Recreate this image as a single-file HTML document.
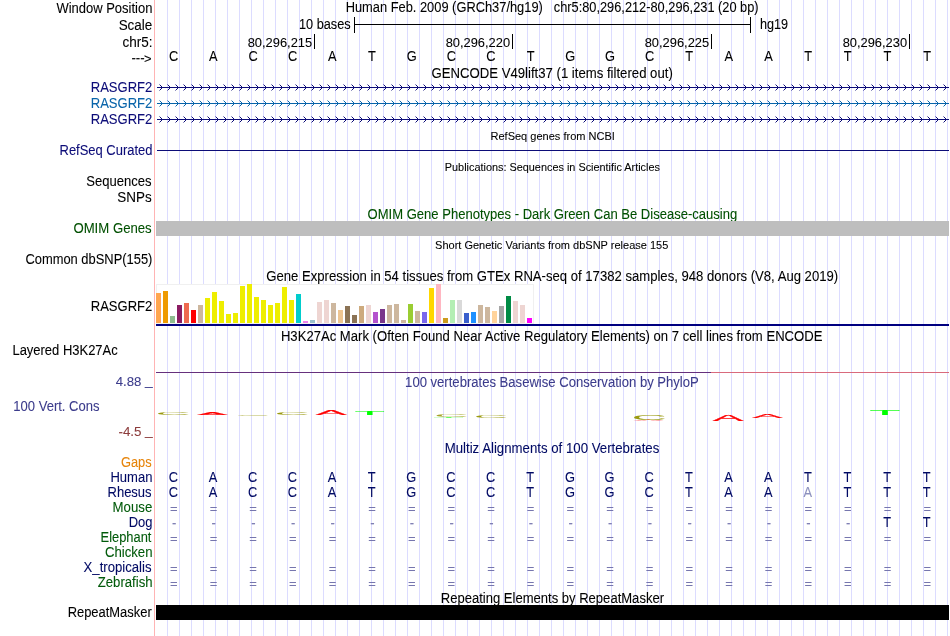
<!DOCTYPE html>
<html><head><meta charset="utf-8"><title>UCSC Genome Browser chr5:80,296,212-80,296,231</title>
<style>
html,body{margin:0;padding:0;background:#fff;}
svg{display:block;font-family:"Liberation Sans",sans-serif;font-size:13.8px;will-change:transform;}
text{white-space:pre;fill:currentColor;stroke:currentColor;stroke-width:.08px;}
.lg text{stroke-width:.6px;vector-effect:non-scaling-stroke;}
</style></head><body>
<svg width="950" height="636" viewBox="0 0 950 636">
<rect width="950" height="636" fill="#fff"/>
<g shape-rendering="crispEdges" fill="#dcdcff">
<rect x="167" y="0" width="1" height="636"/>
<rect x="179" y="0" width="1" height="636"/>
<rect x="191" y="0" width="1" height="636"/>
<rect x="203" y="0" width="1" height="636"/>
<rect x="215" y="0" width="1" height="636"/>
<rect x="227" y="0" width="1" height="636"/>
<rect x="239" y="0" width="1" height="636"/>
<rect x="251" y="0" width="1" height="636"/>
<rect x="263" y="0" width="1" height="636"/>
<rect x="275" y="0" width="1" height="636"/>
<rect x="287" y="0" width="1" height="636"/>
<rect x="299" y="0" width="1" height="636"/>
<rect x="311" y="0" width="1" height="636"/>
<rect x="323" y="0" width="1" height="636"/>
<rect x="335" y="0" width="1" height="636"/>
<rect x="347" y="0" width="1" height="636"/>
<rect x="359" y="0" width="1" height="636"/>
<rect x="371" y="0" width="1" height="636"/>
<rect x="383" y="0" width="1" height="636"/>
<rect x="395" y="0" width="1" height="636"/>
<rect x="407" y="0" width="1" height="636"/>
<rect x="419" y="0" width="1" height="636"/>
<rect x="431" y="0" width="1" height="636"/>
<rect x="443" y="0" width="1" height="636"/>
<rect x="455" y="0" width="1" height="636"/>
<rect x="467" y="0" width="1" height="636"/>
<rect x="479" y="0" width="1" height="636"/>
<rect x="491" y="0" width="1" height="636"/>
<rect x="503" y="0" width="1" height="636"/>
<rect x="515" y="0" width="1" height="636"/>
<rect x="527" y="0" width="1" height="636"/>
<rect x="539" y="0" width="1" height="636"/>
<rect x="551" y="0" width="1" height="636"/>
<rect x="563" y="0" width="1" height="636"/>
<rect x="575" y="0" width="1" height="636"/>
<rect x="587" y="0" width="1" height="636"/>
<rect x="599" y="0" width="1" height="636"/>
<rect x="611" y="0" width="1" height="636"/>
<rect x="623" y="0" width="1" height="636"/>
<rect x="635" y="0" width="1" height="636"/>
<rect x="647" y="0" width="1" height="636"/>
<rect x="659" y="0" width="1" height="636"/>
<rect x="671" y="0" width="1" height="636"/>
<rect x="683" y="0" width="1" height="636"/>
<rect x="695" y="0" width="1" height="636"/>
<rect x="707" y="0" width="1" height="636"/>
<rect x="719" y="0" width="1" height="636"/>
<rect x="731" y="0" width="1" height="636"/>
<rect x="743" y="0" width="1" height="636"/>
<rect x="755" y="0" width="1" height="636"/>
<rect x="767" y="0" width="1" height="636"/>
<rect x="779" y="0" width="1" height="636"/>
<rect x="791" y="0" width="1" height="636"/>
<rect x="803" y="0" width="1" height="636"/>
<rect x="815" y="0" width="1" height="636"/>
<rect x="827" y="0" width="1" height="636"/>
<rect x="839" y="0" width="1" height="636"/>
<rect x="851" y="0" width="1" height="636"/>
<rect x="863" y="0" width="1" height="636"/>
<rect x="875" y="0" width="1" height="636"/>
<rect x="887" y="0" width="1" height="636"/>
<rect x="899" y="0" width="1" height="636"/>
<rect x="911" y="0" width="1" height="636"/>
<rect x="923" y="0" width="1" height="636"/>
<rect x="935" y="0" width="1" height="636"/>
<rect x="947" y="0" width="1" height="636"/>
<rect x="154" y="0" width="1" height="636" fill="#ffb4b4"/>
</g>
<text x="56.39" y="13" textLength="96.06" lengthAdjust="spacingAndGlyphs">Window Position</text>
<text x="118.65" y="30" textLength="33.64" lengthAdjust="spacingAndGlyphs">Scale</text>
<text x="122.56" y="47" textLength="30.06" lengthAdjust="spacingAndGlyphs">chr5:</text>
<text x="131.41" y="62" font-size="13" textLength="13.21" lengthAdjust="spacingAndGlyphs">---</text>
<text x="143.96" y="63" font-size="12" textLength="7.53" lengthAdjust="spacingAndGlyphs">&gt;</text>
<text x="345.64" y="12" textLength="197.22" lengthAdjust="spacingAndGlyphs">Human Feb. 2009 (GRCh37/hg19)</text>
<text x="553.8" y="12" textLength="204.78" lengthAdjust="spacingAndGlyphs">chr5:80,296,212-80,296,231 (20 bp)</text>
<g shape-rendering="crispEdges">
<rect x="354" y="24" width="397" height="1" fill="#000"/>
<rect x="354" y="17" width="1" height="16" fill="#000"/>
<rect x="750" y="17" width="1" height="16" fill="#000"/>
</g>
<text x="298.94" y="29" textLength="51.69" lengthAdjust="spacingAndGlyphs">10 bases</text>
<text x="759.93" y="29" textLength="28.16" lengthAdjust="spacingAndGlyphs">hg19</text>
<rect x="314" y="34" width="1" height="15" fill="#000" shape-rendering="crispEdges"/>
<text x="247.68" y="47" font-size="13.5" textLength="64.5" lengthAdjust="spacingAndGlyphs">80,296,215</text>
<rect x="512" y="34" width="1" height="15" fill="#000" shape-rendering="crispEdges"/>
<text x="445.69" y="47" font-size="13.5" textLength="64.36" lengthAdjust="spacingAndGlyphs">80,296,220</text>
<rect x="711" y="34" width="1" height="15" fill="#000" shape-rendering="crispEdges"/>
<text x="644.68" y="47" font-size="13.5" textLength="64.5" lengthAdjust="spacingAndGlyphs">80,296,225</text>
<rect x="909" y="34" width="1" height="15" fill="#000" shape-rendering="crispEdges"/>
<text x="842.69" y="47" font-size="13.5" textLength="64.36" lengthAdjust="spacingAndGlyphs">80,296,230</text>
<text x="173.72" y="61" text-anchor="middle" textLength="9.27" lengthAdjust="spacingAndGlyphs">C</text>
<text x="213.38" y="61" text-anchor="middle" textLength="8.56" lengthAdjust="spacingAndGlyphs">A</text>
<text x="253.03" y="61" text-anchor="middle" textLength="9.27" lengthAdjust="spacingAndGlyphs">C</text>
<text x="292.67" y="61" text-anchor="middle" textLength="9.27" lengthAdjust="spacingAndGlyphs">C</text>
<text x="332.32" y="61" text-anchor="middle" textLength="8.56" lengthAdjust="spacingAndGlyphs">A</text>
<text x="371.97" y="61" text-anchor="middle" textLength="7.84" lengthAdjust="spacingAndGlyphs">T</text>
<text x="411.62" y="61" text-anchor="middle" textLength="9.98" lengthAdjust="spacingAndGlyphs">G</text>
<text x="451.27" y="61" text-anchor="middle" textLength="9.27" lengthAdjust="spacingAndGlyphs">C</text>
<text x="490.92" y="61" text-anchor="middle" textLength="9.27" lengthAdjust="spacingAndGlyphs">C</text>
<text x="530.57" y="61" text-anchor="middle" textLength="7.84" lengthAdjust="spacingAndGlyphs">T</text>
<text x="570.23" y="61" text-anchor="middle" textLength="9.98" lengthAdjust="spacingAndGlyphs">G</text>
<text x="609.88" y="61" text-anchor="middle" textLength="9.98" lengthAdjust="spacingAndGlyphs">G</text>
<text x="649.52" y="61" text-anchor="middle" textLength="9.27" lengthAdjust="spacingAndGlyphs">C</text>
<text x="689.17" y="61" text-anchor="middle" textLength="7.84" lengthAdjust="spacingAndGlyphs">T</text>
<text x="728.83" y="61" text-anchor="middle" textLength="8.56" lengthAdjust="spacingAndGlyphs">A</text>
<text x="768.48" y="61" text-anchor="middle" textLength="8.56" lengthAdjust="spacingAndGlyphs">A</text>
<text x="808.12" y="61" text-anchor="middle" textLength="7.84" lengthAdjust="spacingAndGlyphs">T</text>
<text x="847.77" y="61" text-anchor="middle" textLength="7.84" lengthAdjust="spacingAndGlyphs">T</text>
<text x="887.42" y="61" text-anchor="middle" textLength="7.84" lengthAdjust="spacingAndGlyphs">T</text>
<text x="927.08" y="61" text-anchor="middle" textLength="7.84" lengthAdjust="spacingAndGlyphs">T</text>
<text x="431.5" y="78" textLength="241.28" lengthAdjust="spacingAndGlyphs">GENCODE V49lift37 (1 items filtered out)</text>
<defs><pattern id="barb" width="8" height="7" patternUnits="userSpaceOnUse"><g fill="#0c0c78" shape-rendering="crispEdges"><path d="M4 1h1v1h-1zM5 2h1v1h-1zM5 4h1v1h-1zM4 5h1v1h-1z"/><path d="M3 0h1v1h-1zM3 6h1v1h-1z" fill-opacity=".45"/></g></pattern>
<pattern id="barb2" width="8" height="7" patternUnits="userSpaceOnUse"><g fill="#0864aa" shape-rendering="crispEdges"><path d="M4 1h1v1h-1zM5 2h1v1h-1zM5 4h1v1h-1zM4 5h1v1h-1z"/><path d="M3 0h1v1h-1zM3 6h1v1h-1z" fill-opacity=".45"/></g></pattern></defs>
<text x="90.73" y="92" color="#0c0c78" textLength="61.54" lengthAdjust="spacingAndGlyphs">RASGRF2</text>
<g shape-rendering="crispEdges"><rect x="157" y="87" width="792" height="1" fill="#0c0c78"/><rect transform="translate(156,84)" width="793" height="7" fill="url(#barb)"/></g>
<text x="90.73" y="108" color="#0864aa" textLength="61.54" lengthAdjust="spacingAndGlyphs">RASGRF2</text>
<g shape-rendering="crispEdges"><rect x="157" y="103" width="792" height="1" fill="#0864aa"/><rect transform="translate(156,100)" width="793" height="7" fill="url(#barb2)"/></g>
<text x="90.73" y="124" color="#0c0c78" textLength="61.54" lengthAdjust="spacingAndGlyphs">RASGRF2</text>
<g shape-rendering="crispEdges"><rect x="157" y="119" width="792" height="1" fill="#0c0c78"/><rect transform="translate(156,116)" width="793" height="7" fill="url(#barb)"/></g>
<text x="490.5" y="140" font-size="11.3" textLength="124.33" lengthAdjust="spacingAndGlyphs">RefSeq genes from NCBI</text>
<text x="59.53" y="155" color="#0c0c78" textLength="92.98" lengthAdjust="spacingAndGlyphs">RefSeq Curated</text>
<rect x="157" y="150" width="792" height="1" fill="#0c0c78" shape-rendering="crispEdges"/>
<text x="444.81" y="171" font-size="11.3" textLength="215.16" lengthAdjust="spacingAndGlyphs">Publications: Sequences in Scientific Articles</text>
<text x="86.36" y="186" textLength="65.21" lengthAdjust="spacingAndGlyphs">Sequences</text>
<text x="117.35" y="202" textLength="34.4" lengthAdjust="spacingAndGlyphs">SNPs</text>
<text x="367.54" y="219" color="#005000" textLength="369.75" lengthAdjust="spacingAndGlyphs">OMIM Gene Phenotypes - Dark Green Can Be Disease-causing</text>
<text x="73.43" y="233" color="#005000" textLength="78.27" lengthAdjust="spacingAndGlyphs">OMIM Genes</text>
<rect x="156" y="221" width="793" height="15" fill="#bebebe" shape-rendering="crispEdges"/>
<text x="435.07" y="249" font-size="11.3" textLength="233.25" lengthAdjust="spacingAndGlyphs">Short Genetic Variants from dbSNP release 155</text>
<text x="25.4" y="264" textLength="127.04" lengthAdjust="spacingAndGlyphs">Common dbSNP(155)</text>
<text x="266.3" y="281" textLength="571.84" lengthAdjust="spacingAndGlyphs">Gene Expression in 54 tissues from GTEx RNA-seq of 17382 samples, 948 donors (V8, Aug 2019)</text>
<text x="90.73" y="311" textLength="61.54" lengthAdjust="spacingAndGlyphs">RASGRF2</text>
<g shape-rendering="crispEdges">
<rect x="156" y="284" width="378" height="40" fill="#fff"/>
<rect x="156" y="284" width="378" height="1" fill="#f0f0f0"/>
<rect x="533" y="284" width="1" height="40" fill="#f0f0f0"/>
<rect x="156" y="284" width="1" height="40" fill="#f0f0f0"/>
<rect x="156" y="323" width="378" height="1" fill="#f0f0f0"/>
<rect x="156" y="293" width="5" height="30" fill="#FFA54F"/>
<rect x="163" y="291" width="5" height="32" fill="#EE9A00"/>
<rect x="170" y="316" width="5" height="7" fill="#8FBC8F"/>
<rect x="177" y="305" width="5" height="18" fill="#8B1C62"/>
<rect x="184" y="303" width="5" height="20" fill="#EE6A50"/>
<rect x="191" y="310" width="5" height="13" fill="#FF0000"/>
<rect x="198" y="305" width="5" height="18" fill="#CDB79E"/>
<rect x="205" y="298" width="5" height="25" fill="#EEEE00"/>
<rect x="212" y="292" width="5" height="31" fill="#EEEE00"/>
<rect x="219" y="301" width="5" height="22" fill="#EEEE00"/>
<rect x="226" y="314" width="5" height="9" fill="#EEEE00"/>
<rect x="233" y="313" width="5" height="10" fill="#EEEE00"/>
<rect x="240" y="286" width="5" height="37" fill="#EEEE00"/>
<rect x="247" y="284" width="5" height="39" fill="#EEEE00"/>
<rect x="254" y="297" width="5" height="26" fill="#EEEE00"/>
<rect x="261" y="300" width="5" height="23" fill="#EEEE00"/>
<rect x="268" y="305" width="5" height="18" fill="#EEEE00"/>
<rect x="275" y="303" width="5" height="20" fill="#EEEE00"/>
<rect x="282" y="287" width="5" height="36" fill="#EEEE00"/>
<rect x="289" y="300" width="5" height="23" fill="#EEEE00"/>
<rect x="296" y="294" width="5" height="29" fill="#00CDCD"/>
<rect x="303" y="321" width="5" height="2" fill="#EE82EE"/>
<rect x="310" y="320" width="5" height="3" fill="#9AC0CD"/>
<rect x="317" y="302" width="5" height="21" fill="#EED5D2"/>
<rect x="324" y="300" width="5" height="23" fill="#EED5D2"/>
<rect x="331" y="303" width="5" height="20" fill="#CDB79E"/>
<rect x="338" y="310" width="5" height="13" fill="#EEC591"/>
<rect x="345" y="306" width="5" height="17" fill="#8B7355"/>
<rect x="352" y="315" width="5" height="8" fill="#8B7355"/>
<rect x="359" y="306" width="5" height="17" fill="#CDAA7D"/>
<rect x="366" y="305" width="5" height="18" fill="#EED5D2"/>
<rect x="373" y="312" width="5" height="11" fill="#B452CD"/>
<rect x="380" y="309" width="5" height="14" fill="#7A378B"/>
<rect x="387" y="305" width="5" height="18" fill="#CDB79E"/>
<rect x="394" y="304" width="5" height="19" fill="#CDB79E"/>
<rect x="401" y="320" width="5" height="3" fill="#CDB79E"/>
<rect x="408" y="304" width="5" height="19" fill="#9ACD32"/>
<rect x="415" y="311" width="5" height="12" fill="#CDB79E"/>
<rect x="422" y="312" width="5" height="11" fill="#7A67EE"/>
<rect x="429" y="288" width="5" height="35" fill="#FFD700"/>
<rect x="436" y="284" width="5" height="39" fill="#FFB6C1"/>
<rect x="443" y="318" width="5" height="5" fill="#CD9B1D"/>
<rect x="450" y="300" width="5" height="23" fill="#B4EEB4"/>
<rect x="457" y="300" width="5" height="23" fill="#D9D9D9"/>
<rect x="464" y="313" width="5" height="10" fill="#3A5FCD"/>
<rect x="471" y="312" width="5" height="11" fill="#1E90FF"/>
<rect x="478" y="305" width="5" height="18" fill="#CDB79E"/>
<rect x="485" y="307" width="5" height="16" fill="#CDB79E"/>
<rect x="492" y="311" width="5" height="12" fill="#FFD39B"/>
<rect x="499" y="306" width="5" height="17" fill="#A6A6A6"/>
<rect x="506" y="296" width="5" height="27" fill="#008B45"/>
<rect x="513" y="301" width="5" height="22" fill="#EED5D2"/>
<rect x="520" y="305" width="5" height="18" fill="#EED5D2"/>
<rect x="527" y="318" width="5" height="5" fill="#FF00FF"/>
<rect x="156" y="324" width="793" height="2" fill="#000080"/>
</g>
<text x="280.92" y="341" textLength="541.54" lengthAdjust="spacingAndGlyphs">H3K27Ac Mark (Often Found Near Active Regulatory Elements) on 7 cell lines from ENCODE</text>
<text x="12.43" y="355" textLength="105.28" lengthAdjust="spacingAndGlyphs">Layered H3K27Ac</text>
<g shape-rendering="crispEdges"><rect x="156" y="372" width="555" height="1" fill="#66307c"/><rect x="711" y="372" width="238" height="1" fill="#d96a7c"/></g>
<text x="405.11" y="387" color="#3c3c8c" textLength="293.67" lengthAdjust="spacingAndGlyphs">100 vertebrates Basewise Conservation by PhyloP</text>
<text x="115.68" y="386" font-size="13.5" color="#3c3c8c" textLength="25.7" lengthAdjust="spacingAndGlyphs">4.88</text>
<text x="144.91" y="385" font-size="13.5" color="#3c3c8c" textLength="7.65" lengthAdjust="spacingAndGlyphs">_</text>
<text x="13.31" y="411" color="#3c3c8c" textLength="86.24" lengthAdjust="spacingAndGlyphs">100 Vert. Cons</text>
<text x="118.47" y="436" font-size="13.5" color="#8c3c3c" textLength="23.03" lengthAdjust="spacingAndGlyphs">-4.5</text>
<text x="144.91" y="435" font-size="13.5" color="#8c3c3c" textLength="7.65" lengthAdjust="spacingAndGlyphs">_</text>
<g class="lg">
<text transform="matrix(0.4810 0 0 0.0423 155.80 414.96)" font-size="100" color="#9a9a10" style="stroke-width:.25px">C</text>
<text transform="matrix(0.4545 0 0 0.0409 197.17 415.00)" font-size="100" color="#ff0000">A</text>
<text transform="matrix(0.4698 0 0 0.0197 236.05 415.98)" font-size="100" color="#9a9a10" opacity="0.7" style="stroke-width:.25px">C</text>
<text transform="matrix(0.4810 0 0 0.0423 274.80 414.96)" font-size="100" color="#9a9a10" style="stroke-width:.25px">C</text>
<text transform="matrix(0.4636 0 0 0.0657 315.87 415.20)" font-size="100" color="#ff0000">A</text>
<text transform="matrix(0.4920 0 0 0.0580 354.67 415.00)" font-size="100" color="#00ff00">T</text>
<text transform="matrix(0.4746 0 0 0.0296 434.33 417.07)" font-size="100" color="#9a9a10" opacity="0.9" style="stroke-width:.25px">C</text>
<text transform="matrix(0.4956 0 0 0.0174 433.76 418.20)" font-size="100" color="#00ff00" opacity="0.6">T</text>
<text transform="matrix(0.4746 0 0 0.0423 473.93 417.96)" font-size="100" color="#9a9a10" style="stroke-width:.25px">C</text>
<text transform="matrix(0.4841 0 0 0.0718 631.68 419.73)" font-size="100" color="#9a9a10" style="stroke-width:.25px">C</text>
<text transform="matrix(0.4470 0 0 0.0146 633.78 421.00)" font-size="100" color="#ff0000" opacity="0.7">A</text>
<text transform="matrix(0.4606 0 0 0.0920 712.87 421.00)" font-size="100" color="#ff0000">A</text>
<text transform="matrix(0.4545 0 0 0.0496 752.27 418.10)" font-size="100" color="#ff0000">A</text>
<text transform="matrix(0.4991 0 0 0.0725 869.75 415.00)" font-size="100" color="#00ff00">T</text>
</g>
<text x="444.71" y="453" color="#000a64" textLength="214.62" lengthAdjust="spacingAndGlyphs">Multiz Alignments of 100 Vertebrates</text>
<text x="120.92" y="467" color="#e6840a" textLength="30.65" lengthAdjust="spacingAndGlyphs">Gaps</text>
<text x="110.43" y="482" color="#000a64" textLength="42.01" lengthAdjust="spacingAndGlyphs">Human</text>
<text x="107.53" y="497" color="#000a64" textLength="44.09" lengthAdjust="spacingAndGlyphs">Rhesus</text>
<text x="112.61" y="512" color="#005a0a" textLength="39.68" lengthAdjust="spacingAndGlyphs">Mouse</text>
<text x="128.63" y="527" color="#000a64" textLength="23.75" lengthAdjust="spacingAndGlyphs">Dog</text>
<text x="100.54" y="542" color="#005a0a" textLength="50.87" lengthAdjust="spacingAndGlyphs">Elephant</text>
<text x="104.89" y="557" color="#005a0a" textLength="47.6" lengthAdjust="spacingAndGlyphs">Chicken</text>
<text x="83.57" y="572" color="#000a64" textLength="67.96" lengthAdjust="spacingAndGlyphs">X_tropicalis</text>
<text x="97.77" y="587" color="#005a0a" textLength="54.77" lengthAdjust="spacingAndGlyphs">Zebrafish</text>
<text x="173.42" y="482" color="#000a64" text-anchor="middle" textLength="9.27" lengthAdjust="spacingAndGlyphs">C</text>
<text x="173.42" y="497" color="#000a64" text-anchor="middle" textLength="9.27" lengthAdjust="spacingAndGlyphs">C</text>
<text x="173.82" y="513" font-size="13" color="#7676ae" text-anchor="middle">=</text>
<text x="173.82" y="543" font-size="13" color="#7676ae" text-anchor="middle">=</text>
<text x="173.82" y="573" font-size="13" color="#7676ae" text-anchor="middle">=</text>
<text x="173.82" y="588" font-size="13" color="#7676ae" text-anchor="middle">=</text>
<text x="174.12" y="527" font-size="13" color="#7676ae" text-anchor="middle">-</text>
<text x="213.07" y="482" color="#000a64" text-anchor="middle" textLength="8.56" lengthAdjust="spacingAndGlyphs">A</text>
<text x="213.07" y="497" color="#000a64" text-anchor="middle" textLength="8.56" lengthAdjust="spacingAndGlyphs">A</text>
<text x="213.47" y="513" font-size="13" color="#7676ae" text-anchor="middle">=</text>
<text x="213.47" y="543" font-size="13" color="#7676ae" text-anchor="middle">=</text>
<text x="213.47" y="573" font-size="13" color="#7676ae" text-anchor="middle">=</text>
<text x="213.47" y="588" font-size="13" color="#7676ae" text-anchor="middle">=</text>
<text x="213.77" y="527" font-size="13" color="#7676ae" text-anchor="middle">-</text>
<text x="252.72" y="482" color="#000a64" text-anchor="middle" textLength="9.27" lengthAdjust="spacingAndGlyphs">C</text>
<text x="252.72" y="497" color="#000a64" text-anchor="middle" textLength="9.27" lengthAdjust="spacingAndGlyphs">C</text>
<text x="253.12" y="513" font-size="13" color="#7676ae" text-anchor="middle">=</text>
<text x="253.12" y="543" font-size="13" color="#7676ae" text-anchor="middle">=</text>
<text x="253.12" y="573" font-size="13" color="#7676ae" text-anchor="middle">=</text>
<text x="253.12" y="588" font-size="13" color="#7676ae" text-anchor="middle">=</text>
<text x="253.42" y="527" font-size="13" color="#7676ae" text-anchor="middle">-</text>
<text x="292.38" y="482" color="#000a64" text-anchor="middle" textLength="9.27" lengthAdjust="spacingAndGlyphs">C</text>
<text x="292.38" y="497" color="#000a64" text-anchor="middle" textLength="9.27" lengthAdjust="spacingAndGlyphs">C</text>
<text x="292.78" y="513" font-size="13" color="#7676ae" text-anchor="middle">=</text>
<text x="292.78" y="543" font-size="13" color="#7676ae" text-anchor="middle">=</text>
<text x="292.78" y="573" font-size="13" color="#7676ae" text-anchor="middle">=</text>
<text x="292.78" y="588" font-size="13" color="#7676ae" text-anchor="middle">=</text>
<text x="293.08" y="527" font-size="13" color="#7676ae" text-anchor="middle">-</text>
<text x="332.03" y="482" color="#000a64" text-anchor="middle" textLength="8.56" lengthAdjust="spacingAndGlyphs">A</text>
<text x="332.03" y="497" color="#000a64" text-anchor="middle" textLength="8.56" lengthAdjust="spacingAndGlyphs">A</text>
<text x="332.43" y="513" font-size="13" color="#7676ae" text-anchor="middle">=</text>
<text x="332.43" y="543" font-size="13" color="#7676ae" text-anchor="middle">=</text>
<text x="332.43" y="573" font-size="13" color="#7676ae" text-anchor="middle">=</text>
<text x="332.43" y="588" font-size="13" color="#7676ae" text-anchor="middle">=</text>
<text x="332.73" y="527" font-size="13" color="#7676ae" text-anchor="middle">-</text>
<text x="371.68" y="482" color="#000a64" text-anchor="middle" textLength="7.84" lengthAdjust="spacingAndGlyphs">T</text>
<text x="371.68" y="497" color="#000a64" text-anchor="middle" textLength="7.84" lengthAdjust="spacingAndGlyphs">T</text>
<text x="372.08" y="513" font-size="13" color="#7676ae" text-anchor="middle">=</text>
<text x="372.08" y="543" font-size="13" color="#7676ae" text-anchor="middle">=</text>
<text x="372.08" y="573" font-size="13" color="#7676ae" text-anchor="middle">=</text>
<text x="372.08" y="588" font-size="13" color="#7676ae" text-anchor="middle">=</text>
<text x="372.38" y="527" font-size="13" color="#7676ae" text-anchor="middle">-</text>
<text x="411.32" y="482" color="#000a64" text-anchor="middle" textLength="9.98" lengthAdjust="spacingAndGlyphs">G</text>
<text x="411.32" y="497" color="#000a64" text-anchor="middle" textLength="9.98" lengthAdjust="spacingAndGlyphs">G</text>
<text x="411.72" y="513" font-size="13" color="#7676ae" text-anchor="middle">=</text>
<text x="411.72" y="543" font-size="13" color="#7676ae" text-anchor="middle">=</text>
<text x="411.72" y="573" font-size="13" color="#7676ae" text-anchor="middle">=</text>
<text x="411.72" y="588" font-size="13" color="#7676ae" text-anchor="middle">=</text>
<text x="412.02" y="527" font-size="13" color="#7676ae" text-anchor="middle">-</text>
<text x="450.98" y="482" color="#000a64" text-anchor="middle" textLength="9.27" lengthAdjust="spacingAndGlyphs">C</text>
<text x="450.98" y="497" color="#000a64" text-anchor="middle" textLength="9.27" lengthAdjust="spacingAndGlyphs">C</text>
<text x="451.38" y="513" font-size="13" color="#7676ae" text-anchor="middle">=</text>
<text x="451.38" y="543" font-size="13" color="#7676ae" text-anchor="middle">=</text>
<text x="451.38" y="573" font-size="13" color="#7676ae" text-anchor="middle">=</text>
<text x="451.38" y="588" font-size="13" color="#7676ae" text-anchor="middle">=</text>
<text x="451.68" y="527" font-size="13" color="#7676ae" text-anchor="middle">-</text>
<text x="490.62" y="482" color="#000a64" text-anchor="middle" textLength="9.27" lengthAdjust="spacingAndGlyphs">C</text>
<text x="490.62" y="497" color="#000a64" text-anchor="middle" textLength="9.27" lengthAdjust="spacingAndGlyphs">C</text>
<text x="491.02" y="513" font-size="13" color="#7676ae" text-anchor="middle">=</text>
<text x="491.02" y="543" font-size="13" color="#7676ae" text-anchor="middle">=</text>
<text x="491.02" y="573" font-size="13" color="#7676ae" text-anchor="middle">=</text>
<text x="491.02" y="588" font-size="13" color="#7676ae" text-anchor="middle">=</text>
<text x="491.32" y="527" font-size="13" color="#7676ae" text-anchor="middle">-</text>
<text x="530.27" y="482" color="#000a64" text-anchor="middle" textLength="7.84" lengthAdjust="spacingAndGlyphs">T</text>
<text x="530.27" y="497" color="#000a64" text-anchor="middle" textLength="7.84" lengthAdjust="spacingAndGlyphs">T</text>
<text x="530.67" y="513" font-size="13" color="#7676ae" text-anchor="middle">=</text>
<text x="530.67" y="543" font-size="13" color="#7676ae" text-anchor="middle">=</text>
<text x="530.67" y="573" font-size="13" color="#7676ae" text-anchor="middle">=</text>
<text x="530.67" y="588" font-size="13" color="#7676ae" text-anchor="middle">=</text>
<text x="530.97" y="527" font-size="13" color="#7676ae" text-anchor="middle">-</text>
<text x="569.93" y="482" color="#000a64" text-anchor="middle" textLength="9.98" lengthAdjust="spacingAndGlyphs">G</text>
<text x="569.93" y="497" color="#000a64" text-anchor="middle" textLength="9.98" lengthAdjust="spacingAndGlyphs">G</text>
<text x="570.33" y="513" font-size="13" color="#7676ae" text-anchor="middle">=</text>
<text x="570.33" y="543" font-size="13" color="#7676ae" text-anchor="middle">=</text>
<text x="570.33" y="573" font-size="13" color="#7676ae" text-anchor="middle">=</text>
<text x="570.33" y="588" font-size="13" color="#7676ae" text-anchor="middle">=</text>
<text x="570.63" y="527" font-size="13" color="#7676ae" text-anchor="middle">-</text>
<text x="609.58" y="482" color="#000a64" text-anchor="middle" textLength="9.98" lengthAdjust="spacingAndGlyphs">G</text>
<text x="609.58" y="497" color="#000a64" text-anchor="middle" textLength="9.98" lengthAdjust="spacingAndGlyphs">G</text>
<text x="609.98" y="513" font-size="13" color="#7676ae" text-anchor="middle">=</text>
<text x="609.98" y="543" font-size="13" color="#7676ae" text-anchor="middle">=</text>
<text x="609.98" y="573" font-size="13" color="#7676ae" text-anchor="middle">=</text>
<text x="609.98" y="588" font-size="13" color="#7676ae" text-anchor="middle">=</text>
<text x="610.28" y="527" font-size="13" color="#7676ae" text-anchor="middle">-</text>
<text x="649.23" y="482" color="#000a64" text-anchor="middle" textLength="9.27" lengthAdjust="spacingAndGlyphs">C</text>
<text x="649.23" y="497" color="#000a64" text-anchor="middle" textLength="9.27" lengthAdjust="spacingAndGlyphs">C</text>
<text x="649.63" y="513" font-size="13" color="#7676ae" text-anchor="middle">=</text>
<text x="649.63" y="543" font-size="13" color="#7676ae" text-anchor="middle">=</text>
<text x="649.63" y="573" font-size="13" color="#7676ae" text-anchor="middle">=</text>
<text x="649.63" y="588" font-size="13" color="#7676ae" text-anchor="middle">=</text>
<text x="649.93" y="527" font-size="13" color="#7676ae" text-anchor="middle">-</text>
<text x="688.88" y="482" color="#000a64" text-anchor="middle" textLength="7.84" lengthAdjust="spacingAndGlyphs">T</text>
<text x="688.88" y="497" color="#000a64" text-anchor="middle" textLength="7.84" lengthAdjust="spacingAndGlyphs">T</text>
<text x="689.28" y="513" font-size="13" color="#7676ae" text-anchor="middle">=</text>
<text x="689.28" y="543" font-size="13" color="#7676ae" text-anchor="middle">=</text>
<text x="689.28" y="573" font-size="13" color="#7676ae" text-anchor="middle">=</text>
<text x="689.28" y="588" font-size="13" color="#7676ae" text-anchor="middle">=</text>
<text x="689.58" y="527" font-size="13" color="#7676ae" text-anchor="middle">-</text>
<text x="728.53" y="482" color="#000a64" text-anchor="middle" textLength="8.56" lengthAdjust="spacingAndGlyphs">A</text>
<text x="728.53" y="497" color="#000a64" text-anchor="middle" textLength="8.56" lengthAdjust="spacingAndGlyphs">A</text>
<text x="728.93" y="513" font-size="13" color="#7676ae" text-anchor="middle">=</text>
<text x="728.93" y="543" font-size="13" color="#7676ae" text-anchor="middle">=</text>
<text x="728.93" y="573" font-size="13" color="#7676ae" text-anchor="middle">=</text>
<text x="728.93" y="588" font-size="13" color="#7676ae" text-anchor="middle">=</text>
<text x="729.23" y="527" font-size="13" color="#7676ae" text-anchor="middle">-</text>
<text x="768.18" y="482" color="#000a64" text-anchor="middle" textLength="8.56" lengthAdjust="spacingAndGlyphs">A</text>
<text x="768.18" y="497" color="#000a64" text-anchor="middle" textLength="8.56" lengthAdjust="spacingAndGlyphs">A</text>
<text x="768.58" y="513" font-size="13" color="#7676ae" text-anchor="middle">=</text>
<text x="768.58" y="543" font-size="13" color="#7676ae" text-anchor="middle">=</text>
<text x="768.58" y="573" font-size="13" color="#7676ae" text-anchor="middle">=</text>
<text x="768.58" y="588" font-size="13" color="#7676ae" text-anchor="middle">=</text>
<text x="768.88" y="527" font-size="13" color="#7676ae" text-anchor="middle">-</text>
<text x="807.83" y="482" color="#000a64" text-anchor="middle" textLength="7.84" lengthAdjust="spacingAndGlyphs">T</text>
<text x="807.83" y="497" color="#8c90be" text-anchor="middle" textLength="8.56" lengthAdjust="spacingAndGlyphs">A</text>
<text x="808.23" y="513" font-size="13" color="#7676ae" text-anchor="middle">=</text>
<text x="808.23" y="543" font-size="13" color="#7676ae" text-anchor="middle">=</text>
<text x="808.23" y="573" font-size="13" color="#7676ae" text-anchor="middle">=</text>
<text x="808.23" y="588" font-size="13" color="#7676ae" text-anchor="middle">=</text>
<text x="808.53" y="527" font-size="13" color="#7676ae" text-anchor="middle">-</text>
<text x="847.48" y="482" color="#000a64" text-anchor="middle" textLength="7.84" lengthAdjust="spacingAndGlyphs">T</text>
<text x="847.48" y="497" color="#000a64" text-anchor="middle" textLength="7.84" lengthAdjust="spacingAndGlyphs">T</text>
<text x="847.88" y="513" font-size="13" color="#7676ae" text-anchor="middle">=</text>
<text x="847.88" y="543" font-size="13" color="#7676ae" text-anchor="middle">=</text>
<text x="847.88" y="573" font-size="13" color="#7676ae" text-anchor="middle">=</text>
<text x="847.88" y="588" font-size="13" color="#7676ae" text-anchor="middle">=</text>
<text x="848.18" y="527" font-size="13" color="#7676ae" text-anchor="middle">-</text>
<text x="887.12" y="482" color="#000a64" text-anchor="middle" textLength="7.84" lengthAdjust="spacingAndGlyphs">T</text>
<text x="887.12" y="497" color="#000a64" text-anchor="middle" textLength="7.84" lengthAdjust="spacingAndGlyphs">T</text>
<text x="887.52" y="513" font-size="13" color="#7676ae" text-anchor="middle">=</text>
<text x="887.52" y="543" font-size="13" color="#7676ae" text-anchor="middle">=</text>
<text x="887.52" y="573" font-size="13" color="#7676ae" text-anchor="middle">=</text>
<text x="887.52" y="588" font-size="13" color="#7676ae" text-anchor="middle">=</text>
<text x="887.12" y="527" color="#000a64" text-anchor="middle" textLength="7.84" lengthAdjust="spacingAndGlyphs">T</text>
<text x="926.78" y="482" color="#000a64" text-anchor="middle" textLength="7.84" lengthAdjust="spacingAndGlyphs">T</text>
<text x="926.78" y="497" color="#000a64" text-anchor="middle" textLength="7.84" lengthAdjust="spacingAndGlyphs">T</text>
<text x="927.18" y="513" font-size="13" color="#7676ae" text-anchor="middle">=</text>
<text x="927.18" y="543" font-size="13" color="#7676ae" text-anchor="middle">=</text>
<text x="927.18" y="573" font-size="13" color="#7676ae" text-anchor="middle">=</text>
<text x="927.18" y="588" font-size="13" color="#7676ae" text-anchor="middle">=</text>
<text x="926.78" y="527" color="#000a64" text-anchor="middle" textLength="7.84" lengthAdjust="spacingAndGlyphs">T</text>
<text x="440.72" y="603" textLength="223.31" lengthAdjust="spacingAndGlyphs">Repeating Elements by RepeatMasker</text>
<text x="67.63" y="617" textLength="84.11" lengthAdjust="spacingAndGlyphs">RepeatMasker</text>
<rect x="156" y="605" width="793" height="15" fill="#000" shape-rendering="crispEdges"/>
</svg>
</body></html>
